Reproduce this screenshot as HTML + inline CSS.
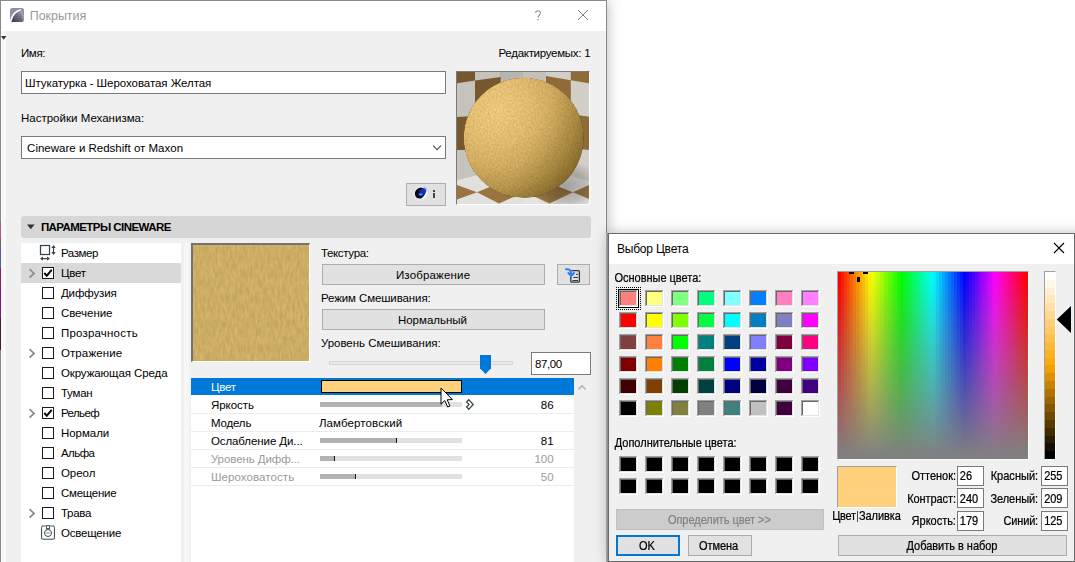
<!DOCTYPE html>
<html><head><meta charset="utf-8"><title>UI</title>
<style>
html,body{margin:0;padding:0;width:1075px;height:562px;overflow:hidden;background:#fff;}
#root{position:absolute;left:0;top:0;width:1075px;height:562px;overflow:hidden;background:#fff;font-family:"Liberation Sans",sans-serif;}
div,span,svg{box-sizing:border-box;}
</style></head><body><div id="root">
<div style="position:absolute;left:0px;top:0px;width:607px;height:580px;background:#f0f0f0;border-left:1px solid #8a8a8a;border-top:1px solid #8a8a8a;border-right:1px solid #8a8a8a;box-shadow:0 0 13px 0 rgba(0,0,0,.30);"></div>
<div style="position:absolute;left:0px;top:222px;width:1px;height:16px;background:#b4568c;"></div>
<div style="position:absolute;left:0px;top:238px;width:1px;height:8px;background:#6a6a6a;"></div>
<div style="position:absolute;left:0px;top:246px;width:1px;height:22px;background:#5a5aa0;"></div>
<div style="position:absolute;left:0px;top:268px;width:1px;height:24px;background:#8a2060;"></div>
<div style="position:absolute;left:0px;top:292px;width:1px;height:26px;background:#7a1a7a;"></div>
<div style="position:absolute;left:0px;top:318px;width:1px;height:32px;background:#40203a;"></div>
<div style="position:absolute;left:1px;top:1px;width:605px;height:30px;background:#fff;"></div>
<div style="position:absolute;left:1px;top:31px;width:5px;height:531px;background:#f8f8f8;"></div>
<svg style="position:absolute;left:1px;top:35px" width="6" height="6" viewBox="0 0 6 6"><path d="M0 1 L5.4 1 L2.7 4.8 Z" fill="#333"/></svg>
<svg style="position:absolute;left:10px;top:8px" width="14" height="14" viewBox="0 0 14 14">
<defs><linearGradient id="ig2" x1="0.2" y1="1" x2="0.95" y2="0.2"><stop offset="0" stop-color="#3c3a4a"/><stop offset="0.55" stop-color="#6c6a80"/><stop offset="1" stop-color="#9694ac"/></linearGradient></defs>
<rect x="0" y="0" width="14" height="14" rx="2.2" fill="#908ea6"/>
<path d="M0.8 14 C2.6 7.4 6.0 3.4 10.2 2.4 C12.6 4.4 13.2 8 12.8 11.6 L12.8 14 Z" fill="url(#ig2)"/>
<path d="M0.5 13.4 C2.4 6.8 5.8 2.9 10.2 2.0" stroke="#fff" stroke-width="1.7" fill="none" stroke-linecap="round"/>
<path d="M10.6 2.2 C12.6 4.4 13.2 7.4 12.6 10.4" stroke="#c4c3d2" stroke-width="0.9" fill="none" stroke-dasharray="1.2 0.6"/>
</svg>
<span style="position:absolute;left:29.75px;top:8.00px;line-height:16px;white-space:pre;font-size:12.5px;font-weight:400;color:#999;letter-spacing:-0.057px;">Покрытия</span>
<svg style="position:absolute;left:533px;top:8px" width="10" height="14" viewBox="533 8 10 14"><path d="M535.7 12.9 C535.6 10.2 540.5 10.0 540.4 13.0 C540.3 15.2 538.0 15.2 538.0 17.8" stroke="#8a8a8a" stroke-width="1.05" fill="none"/><rect x="537.4" y="19" width="1.2" height="1.2" fill="#8a8a8a"/></svg>
<svg style="position:absolute;left:577px;top:9px" width="12" height="12" viewBox="0 0 12 12"><path d="M1 1 L11 11 M11 1 L1 11" stroke="#808080" stroke-width="1" fill="none"/></svg>
<span style="position:absolute;left:20.91px;top:45.00px;line-height:16px;white-space:pre;font-size:11.5px;font-weight:400;color:#000;letter-spacing:-0.316px;">Имя:</span>
<span style="position:absolute;left:498.45px;top:45.00px;line-height:16px;white-space:pre;font-size:11.5px;font-weight:400;color:#000;letter-spacing:-0.276px;">Редактируемых: 1</span>
<div style="position:absolute;left:21px;top:71px;width:425px;height:23px;background:#fff;border:1px solid #7a7a7a;"></div>
<span style="position:absolute;left:24.91px;top:75.00px;line-height:16px;white-space:pre;font-size:11.5px;font-weight:400;color:#000;letter-spacing:-0.056px;">Штукатурка - Шероховатая Желтая</span>
<span style="position:absolute;left:20.91px;top:110.00px;line-height:16px;white-space:pre;font-size:11.5px;font-weight:400;color:#000;letter-spacing:0.017px;">Настройки Механизма:</span>
<div style="position:absolute;left:21px;top:136px;width:425px;height:23px;background:#fff;border:1px solid #7a7a7a;"></div>
<span style="position:absolute;left:27.11px;top:140.00px;line-height:16px;white-space:pre;font-size:11.5px;font-weight:400;color:#000;letter-spacing:0.001px;">Cineware и Redshift от Maxon</span>
<svg style="position:absolute;left:431px;top:143px" width="12" height="9" viewBox="431 143 12 9"><path d="M433.2 145.7 L437.1 149.6 L441.0 145.7" stroke="#505050" stroke-width="1.15" fill="none"/></svg>
<div style="position:absolute;left:406px;top:183px;width:40px;height:23px;background:#e1e1e1;border:1px solid #adadad;"></div>
<svg style="position:absolute;left:412px;top:185px" width="18" height="18" viewBox="412 185 18 18">
<defs><linearGradient id="c4" x1="0.1" y1="1" x2="0.9" y2="0"><stop offset="0" stop-color="#060c48"/><stop offset="0.5" stop-color="#0e2cac"/><stop offset="1" stop-color="#2040d0"/></linearGradient></defs>
<ellipse cx="421.1" cy="193.7" rx="7.1" ry="6.9" fill="#f4f4f7"/>
<ellipse cx="421.4" cy="194.2" rx="6.6" ry="6.2" fill="#dcdce6"/>
<ellipse cx="421.0" cy="193.4" rx="6.5" ry="6.2" fill="#fafafc"/>
<path d="M414.9 194.2 C414.6 190.6 417.6 187.8 421.4 187.6 L425.0 189.4 C426.0 193.0 424.0 197.6 420.2 198.6 C417.2 198.8 415.2 197.0 414.9 194.2 Z" fill="#06061a"/>
<path d="M418.4 196.0 C417.2 193.0 419.6 189.4 424.2 187.4 L426.4 189.6 C426.4 192.8 424.4 196.0 421.2 197.0 C420.0 197.2 418.9 196.9 418.4 196.0 Z" fill="url(#c4)"/>
<ellipse cx="420.8" cy="194.4" rx="1.9" ry="1.1" fill="#3f8fff"/>
<path d="M424.2 187.6 L426.4 189.6" stroke="#8aa4f8" stroke-width="1.4" fill="none"/>
</svg>
<div style="position:absolute;left:433px;top:190px;width:2px;height:2px;background:#444;"></div>
<div style="position:absolute;left:433px;top:193px;width:2px;height:5px;background:#444;"></div>
<div style="position:absolute;left:456px;top:71px;width:134px;height:134px;border-top:1px solid #7a7a7a;border-left:1px solid #7a7a7a;border-right:1px solid #fff;border-bottom:1px solid #fff;background:#888;"></div>
<svg style="position:absolute;left:457px;top:72px" width="132" height="132" viewBox="457 72 132 132">
<defs>
<radialGradient id="sg" cx="0.30" cy="0.28" r="0.86"><stop offset="0" stop-color="#ecc87e"/><stop offset="0.3" stop-color="#e3bd70"/><stop offset="0.55" stop-color="#d2ac60"/><stop offset="0.75" stop-color="#b9964d"/><stop offset="0.9" stop-color="#9c7c3c"/><stop offset="1" stop-color="#7a5e2a"/></radialGradient>
<filter id="nz" x="0" y="0" width="100%" height="100%" color-interpolation-filters="sRGB"><feTurbulence type="fractalNoise" baseFrequency="0.6 0.45" numOctaves="3" seed="3" result="n"/><feColorMatrix in="n" type="matrix" values="0.22 0 0 0 0.39  0.22 0 0 0 0.39  0.22 0 0 0 0.39  0 0 0 0 1" result="g"/><feComposite in="SourceGraphic" in2="g" operator="arithmetic" k1="1.0" k2="0.5" k3="0" k4="0" result="m"/><feComposite in="m" in2="SourceAlpha" operator="in"/></filter>
<radialGradient id="fsh" cx="0.5" cy="0.5" r="0.5"><stop offset="0" stop-color="#000" stop-opacity="0.30"/><stop offset="0.6" stop-color="#000" stop-opacity="0.18"/><stop offset="1" stop-color="#000" stop-opacity="0"/></radialGradient>
<linearGradient id="term" x1="0.25" y1="0.3" x2="1" y2="0.7"><stop offset="0" stop-color="#504408" stop-opacity="0"/><stop offset="0.45" stop-color="#504408" stop-opacity="0.04"/><stop offset="1" stop-color="#504408" stop-opacity="0.30"/></linearGradient>
<clipPath id="pc"><rect x="457" y="72" width="132" height="132"/></clipPath>
</defs>
<g clip-path="url(#pc)">
<!-- left wall (shadow) -->
<rect x="457" y="72" width="67" height="132" fill="#c6c2bc"/>
<polygon points="457,72 475,72 475,80.6 457,83.2" fill="#77572d"/>
<polygon points="475,80.6 500.8,77 500.8,112 475,116" fill="#77572d"/>
<polygon points="500.8,72 506.8,72 500.8,77" fill="#77572d"/>
<polygon points="457,117 475,116 475,150 457,150" fill="#77572d"/>
<polygon points="500.8,72 523.7,72 523.7,110 500.8,112" fill="#b9b5af"/>
<!-- right wall (lit) -->
<rect x="523.7" y="72" width="66" height="132" fill="#d2cec8"/>
<polygon points="534,72 546,72 546,76.1" fill="#8f6b3a"/>
<polygon points="546,76.1 570.8,80.2 570.8,114 546,110" fill="#8f6b3a"/>
<polygon points="570.8,72 589,72 589,83.2 570.8,80.2" fill="#8f6b3a"/>
<polygon points="570.8,114 589,116.7 589,150 570.8,148" fill="#8f6b3a"/>
<polygon points="523.7,72 546,72 546,110 523.7,108" fill="#c4c0ba"/>
<!-- floor -->
<polygon points="457,180.5 490,172 523.7,166 557,172 589,181.2 589,204 457,204" fill="#e6e4e0"/>
<polygon points="457,180.5 490,172 523.7,166 523.7,204 457,204" fill="#e2e0dc"/>
<polygon points="457,185 477,192.3 457,199.5" fill="#9a7440"/>
<polygon points="477,192.3 497,184 520,194 499,203.6" fill="#9a7440"/>
<polygon points="573,192.3 552,184 529,194 549.5,203.6" fill="#a07a44"/>
<polygon points="589,185 573,192.3 589,199" fill="#a07a44"/>
<!-- floor/wall shadow -->
<ellipse cx="566" cy="186" rx="34" ry="26" fill="url(#fsh)"/>
<!-- sphere -->
<circle cx="523.7" cy="137.7" r="60" fill="url(#sg)" filter="url(#nz)"/>
<circle cx="523.7" cy="137.7" r="60" fill="url(#term)"/>
</g></svg>
<div style="position:absolute;left:21px;top:216px;width:570px;height:22px;background:#d6d6d6;border-radius:3px;"></div>
<svg style="position:absolute;left:26px;top:223px" width="10" height="8" viewBox="0 0 10 8"><path d="M1 1.6 L8.6 1.6 L4.8 6.2 Z" fill="#333"/></svg>
<span style="position:absolute;left:40.91px;top:218.60px;line-height:16px;white-space:pre;font-size:11.5px;font-weight:700;color:#000;letter-spacing:-0.554px;">ПАРАМЕТРЫ CINEWARE</span>
<div style="position:absolute;left:21px;top:243px;width:160px;height:319px;background:#fff;"></div>
<div style="position:absolute;left:21px;top:263px;width:160px;height:20px;background:#d9d9d9;"></div>
<span style="position:absolute;left:60.91px;top:244.60px;line-height:16px;white-space:pre;font-size:11.5px;font-weight:400;color:#000;letter-spacing:-0.414px;">Размер</span>
<svg style="position:absolute;left:39px;top:244px" width="18" height="18" viewBox="0 0 18 18">
<rect x="1.5" y="1.5" width="9" height="9" fill="none" stroke="#36454a" stroke-width="1.25"/>
<path d="M14.5 2 L14.5 10" stroke="#36454a" stroke-width="1.2" fill="none"/>
<path d="M12.3 3.9 L14.5 1.1 L16.7 3.9 Z M12.3 8.1 L14.5 10.9 L16.7 8.1 Z" fill="#36454a"/>
<path d="M2 14.6 L10 14.6" stroke="#36454a" stroke-width="1.2" fill="none"/>
<path d="M3.9 12.5 L1.1 14.6 L3.9 16.7 Z M8.1 12.5 L10.9 14.6 L8.1 16.7 Z" fill="#36454a"/>
</svg>
<span style="position:absolute;left:60.91px;top:264.60px;line-height:16px;white-space:pre;font-size:11.5px;font-weight:400;color:#000;letter-spacing:-0.209px;">Цвет</span>
<div style="position:absolute;left:42px;top:267px;width:12px;height:12px;background:#fff;border:1px solid #1a1a1a;"></div>
<svg style="position:absolute;left:42px;top:267px" width="12" height="12" viewBox="0 0 12 12"><path d="M2.3 6.0 L4.8 8.7 L9.7 2.8" stroke="#000" stroke-width="1.9" fill="none"/></svg>
<svg style="position:absolute;left:28px;top:268px" width="8" height="11" viewBox="0 0 8 11"><path d="M1.5 1.2 L6 5.4 L1.5 9.6" stroke="#8c8c8c" stroke-width="1.8" fill="none"/></svg>
<span style="position:absolute;left:60.91px;top:284.60px;line-height:16px;white-space:pre;font-size:11.5px;font-weight:400;color:#000;letter-spacing:-0.118px;">Диффузия</span>
<div style="position:absolute;left:42px;top:287px;width:12px;height:12px;background:#fff;border:1px solid #1a1a1a;"></div>
<span style="position:absolute;left:60.91px;top:304.60px;line-height:16px;white-space:pre;font-size:11.5px;font-weight:400;color:#000;letter-spacing:-0.039px;">Свечение</span>
<div style="position:absolute;left:42px;top:307px;width:12px;height:12px;background:#fff;border:1px solid #1a1a1a;"></div>
<span style="position:absolute;left:60.91px;top:324.60px;line-height:16px;white-space:pre;font-size:11.5px;font-weight:400;color:#000;letter-spacing:0.204px;">Прозрачность</span>
<div style="position:absolute;left:42px;top:327px;width:12px;height:12px;background:#fff;border:1px solid #1a1a1a;"></div>
<span style="position:absolute;left:60.91px;top:344.60px;line-height:16px;white-space:pre;font-size:11.5px;font-weight:400;color:#000;letter-spacing:0.12px;">Отражение</span>
<div style="position:absolute;left:42px;top:347px;width:12px;height:12px;background:#fff;border:1px solid #1a1a1a;"></div>
<svg style="position:absolute;left:28px;top:348px" width="8" height="11" viewBox="0 0 8 11"><path d="M1.5 1.2 L6 5.4 L1.5 9.6" stroke="#8c8c8c" stroke-width="1.8" fill="none"/></svg>
<span style="position:absolute;left:60.91px;top:364.60px;line-height:16px;white-space:pre;font-size:11.5px;font-weight:400;color:#000;letter-spacing:-0.096px;">Окружающая Среда</span>
<div style="position:absolute;left:42px;top:367px;width:12px;height:12px;background:#fff;border:1px solid #1a1a1a;"></div>
<span style="position:absolute;left:60.91px;top:384.60px;line-height:16px;white-space:pre;font-size:11.5px;font-weight:400;color:#000;letter-spacing:-0.222px;">Туман</span>
<div style="position:absolute;left:42px;top:387px;width:12px;height:12px;background:#fff;border:1px solid #1a1a1a;"></div>
<span style="position:absolute;left:60.91px;top:404.60px;line-height:16px;white-space:pre;font-size:11.5px;font-weight:400;color:#000;letter-spacing:-0.584px;">Рельеф</span>
<div style="position:absolute;left:42px;top:407px;width:12px;height:12px;background:#fff;border:1px solid #1a1a1a;"></div>
<svg style="position:absolute;left:42px;top:407px" width="12" height="12" viewBox="0 0 12 12"><path d="M2.3 6.0 L4.8 8.7 L9.7 2.8" stroke="#000" stroke-width="1.9" fill="none"/></svg>
<svg style="position:absolute;left:28px;top:408px" width="8" height="11" viewBox="0 0 8 11"><path d="M1.5 1.2 L6 5.4 L1.5 9.6" stroke="#8c8c8c" stroke-width="1.8" fill="none"/></svg>
<span style="position:absolute;left:60.91px;top:424.60px;line-height:16px;white-space:pre;font-size:11.5px;font-weight:400;color:#000;letter-spacing:-0.029px;">Нормали</span>
<div style="position:absolute;left:42px;top:427px;width:12px;height:12px;background:#fff;border:1px solid #1a1a1a;"></div>
<span style="position:absolute;left:60.91px;top:444.60px;line-height:16px;white-space:pre;font-size:11.5px;font-weight:400;color:#000;letter-spacing:-0.538px;">Альфа</span>
<div style="position:absolute;left:42px;top:447px;width:12px;height:12px;background:#fff;border:1px solid #1a1a1a;"></div>
<span style="position:absolute;left:60.91px;top:464.60px;line-height:16px;white-space:pre;font-size:11.5px;font-weight:400;color:#000;letter-spacing:-0.01px;">Ореол</span>
<div style="position:absolute;left:42px;top:467px;width:12px;height:12px;background:#fff;border:1px solid #1a1a1a;"></div>
<span style="position:absolute;left:60.91px;top:484.60px;line-height:16px;white-space:pre;font-size:11.5px;font-weight:400;color:#000;letter-spacing:-0.246px;">Смещение</span>
<div style="position:absolute;left:42px;top:487px;width:12px;height:12px;background:#fff;border:1px solid #1a1a1a;"></div>
<span style="position:absolute;left:60.91px;top:504.60px;line-height:16px;white-space:pre;font-size:11.5px;font-weight:400;color:#000;letter-spacing:-0.26px;">Трава</span>
<div style="position:absolute;left:42px;top:507px;width:12px;height:12px;background:#fff;border:1px solid #1a1a1a;"></div>
<svg style="position:absolute;left:28px;top:508px" width="8" height="11" viewBox="0 0 8 11"><path d="M1.5 1.2 L6 5.4 L1.5 9.6" stroke="#8c8c8c" stroke-width="1.8" fill="none"/></svg>
<span style="position:absolute;left:60.91px;top:524.60px;line-height:16px;white-space:pre;font-size:11.5px;font-weight:400;color:#000;letter-spacing:-0.193px;">Освещение</span>
<svg style="position:absolute;left:41px;top:525px" width="14" height="15" viewBox="0 0 14 15">
<path d="M4.6 1 L1.8 1 Q0.6 1 0.6 2.2 L0.6 13 Q0.6 14.2 1.8 14.2 L12.2 14.2 Q13.4 14.2 13.4 13 L13.4 2.2 Q13.4 1 12.2 1 L9.4 1" stroke="#36454a" stroke-width="1" fill="none"/>
<rect x="5.4" y="0.6" width="3.2" height="3" fill="none" stroke="#36454a" stroke-width="0.9"/>
<circle cx="7" cy="8" r="3.5" fill="none" stroke="#36454a" stroke-width="1"/>
<path d="M5.2 8.3 L6 7.4 L7 8.6 L8 7.4 L8.8 8.3" stroke="#36454a" stroke-width="0.7" fill="none"/>
</svg>
<div style="position:absolute;left:184px;top:243px;width:5px;height:319px;background:#f7f7f7;"></div>
<div style="position:absolute;left:191px;top:243px;width:119px;height:119px;background:#c8a85c;border-top:2px solid #727272;border-left:2px solid #727272;border-right:1px solid #fff;border-bottom:1px solid #fff;"></div>
<svg style="position:absolute;left:193px;top:245px" width="116" height="116" viewBox="0 0 116 116">
<defs><filter id="tx" x="0" y="0" width="100%" height="100%" color-interpolation-filters="sRGB"><feTurbulence type="fractalNoise" baseFrequency="0.40 0.12" numOctaves="3" seed="7" result="n"/>
<feColorMatrix in="n" type="matrix" values="0.14 0 0 0 0.730  0.13 0 0 0 0.613  0.09 0 0 0 0.347  0 0 0 0 1"/></filter></defs>
<rect width="116" height="116" fill="#c9a95d" filter="url(#tx)"/>
</svg>
<span style="position:absolute;left:320.91px;top:244.60px;line-height:16px;white-space:pre;font-size:11.5px;font-weight:400;color:#000;letter-spacing:-0.329px;">Текстура:</span>
<div style="position:absolute;left:322px;top:264px;width:223px;height:21px;background:#e1e1e1;border:1px solid #adadad;"></div>
<span style="position:absolute;left:395.91px;top:267.00px;line-height:16px;white-space:pre;font-size:11.5px;font-weight:400;color:#000;letter-spacing:0.172px;">Изображение</span>
<div style="position:absolute;left:557px;top:264px;width:33px;height:21px;background:#e1e1e1;border:1px solid #adadad;"></div>
<svg style="position:absolute;left:560px;top:265px" width="26" height="19" viewBox="560 265 26 19">
<path d="M571.6 270.6 L578.4 270.6 Q579.4 270.6 579.4 271.6 L579.4 281.2 Q579.4 282.2 578.4 282.2 L571.8 282.2 Q570.8 282.2 570.8 281.2 L570.8 276.4" fill="none" stroke="#2c3a40" stroke-width="1.3"/>
<path d="M576 274.3 H578 M573.4 277.5 H578 M572.4 280.5 H578" stroke="#2c3a40" stroke-width="1.1"/>
<path d="M565.2 269.2 L567.6 269.2 C570.2 269.2 571.2 270.6 571.2 274.4" stroke="#2a7fff" stroke-width="2.1" fill="none"/>
<path d="M567.8 272.4 L571.2 276.0 L574.6 272.4" stroke="#2a7fff" stroke-width="2.1" fill="none"/>
<path d="M569 273 L573.4 273 L571.2 275.6 Z" fill="#2a7fff"/>
</svg>
<span style="position:absolute;left:320.91px;top:289.60px;line-height:16px;white-space:pre;font-size:11.5px;font-weight:400;color:#000;letter-spacing:-0.102px;">Режим Смешивания:</span>
<div style="position:absolute;left:322px;top:309px;width:223px;height:21px;background:#e1e1e1;border:1px solid #adadad;"></div>
<span style="position:absolute;left:397.91px;top:312.00px;line-height:16px;white-space:pre;font-size:11.5px;font-weight:400;color:#000;letter-spacing:0.0px;">Нормальный</span>
<span style="position:absolute;left:320.91px;top:334.60px;line-height:16px;white-space:pre;font-size:11.5px;font-weight:400;color:#000;letter-spacing:-0.031px;">Уровень Смешивания:</span>
<div style="position:absolute;left:329px;top:361px;width:184px;height:4px;background:#e7eaea;border:1px solid #d6d6d6;"></div>
<svg style="position:absolute;left:480px;top:355px" width="11" height="19" viewBox="0 0 11 19"><path d="M0 0 H11 V13.2 L5.5 19 L0 13.2 Z" fill="#0078d7"/></svg>
<div style="position:absolute;left:531px;top:352px;width:60px;height:23px;background:#fff;border:1px solid #7a7a7a;"></div>
<span style="position:absolute;left:534.91px;top:356.00px;line-height:16px;white-space:pre;font-size:11.5px;font-weight:400;color:#000;letter-spacing:-0.407px;">87,00</span>
<div style="position:absolute;left:191px;top:378px;width:400px;height:184px;background:#fff;"></div>
<div style="position:absolute;left:574px;top:378px;width:17px;height:184px;background:#f0f0f0;"></div>
<svg style="position:absolute;left:577px;top:383px" width="10" height="8" viewBox="0 0 10 8"><path d="M1.4 6.4 L5 2.8 L8.6 6.4" stroke="#bcbcbc" stroke-width="1.9" fill="none"/></svg>
<div style="position:absolute;left:191px;top:378px;width:383px;height:17px;background:#0078d7;"></div>
<div style="position:absolute;left:321px;top:380px;width:141px;height:13px;background:#ffd17d;border:1px solid #000;"></div>
<div style="position:absolute;left:191px;top:413px;width:383px;height:1px;background:#ececec;"></div>
<div style="position:absolute;left:191px;top:431px;width:383px;height:1px;background:#ececec;"></div>
<div style="position:absolute;left:191px;top:449px;width:383px;height:1px;background:#ececec;"></div>
<div style="position:absolute;left:191px;top:467px;width:383px;height:1px;background:#ececec;"></div>
<div style="position:absolute;left:191px;top:485px;width:383px;height:1px;background:#ececec;"></div>
<span style="position:absolute;left:210.91px;top:379.00px;line-height:16px;white-space:pre;font-size:11.5px;font-weight:400;color:#fff;letter-spacing:-0.259px;">Цвет</span>
<span style="position:absolute;left:210.91px;top:397.00px;line-height:16px;white-space:pre;font-size:11.5px;font-weight:400;color:#000;letter-spacing:-0.046px;">Яркость</span>
<div style="position:absolute;left:320px;top:402px;width:142px;height:5px;background:#e1e1e1;"></div>
<div style="position:absolute;left:320px;top:402px;width:122px;height:5px;background:#b2b2b2;"></div>
<span style="position:absolute;left:540.78px;top:397.00px;line-height:16px;white-space:pre;font-size:11.5px;font-weight:400;color:#000;letter-spacing:0px;">86</span>
<span style="position:absolute;left:210.91px;top:415.00px;line-height:16px;white-space:pre;font-size:11.5px;font-weight:400;color:#000;letter-spacing:-0.156px;">Модель</span>
<span style="position:absolute;left:210.91px;top:433.00px;line-height:16px;white-space:pre;font-size:11.5px;font-weight:400;color:#000;letter-spacing:-0.087px;">Ослабление Ди...</span>
<div style="position:absolute;left:320px;top:438px;width:142px;height:5px;background:#e1e1e1;"></div>
<div style="position:absolute;left:320px;top:438px;width:76px;height:5px;background:#b2b2b2;"></div>
<div style="position:absolute;left:395.8px;top:437.6px;width:1.4px;height:5.6px;background:#111;"></div>
<span style="position:absolute;left:540.78px;top:433.00px;line-height:16px;white-space:pre;font-size:11.5px;font-weight:400;color:#000;letter-spacing:0px;">81</span>
<span style="position:absolute;left:210.91px;top:451.00px;line-height:16px;white-space:pre;font-size:11.5px;font-weight:400;color:#9a9a9a;letter-spacing:-0.085px;">Уровень Дифф...</span>
<div style="position:absolute;left:320px;top:456px;width:142px;height:5px;background:#e1e1e1;"></div>
<div style="position:absolute;left:320px;top:456px;width:14px;height:5px;background:#b2b2b2;"></div>
<div style="position:absolute;left:333.8px;top:455.6px;width:1.4px;height:5.6px;background:#111;"></div>
<span style="position:absolute;left:534.39px;top:451.00px;line-height:16px;white-space:pre;font-size:11.5px;font-weight:400;color:#9a9a9a;letter-spacing:0px;">100</span>
<span style="position:absolute;left:210.91px;top:469.00px;line-height:16px;white-space:pre;font-size:11.5px;font-weight:400;color:#9a9a9a;letter-spacing:0.082px;">Шероховатость</span>
<div style="position:absolute;left:320px;top:474px;width:142px;height:5px;background:#e1e1e1;"></div>
<div style="position:absolute;left:320px;top:474px;width:35px;height:5px;background:#b2b2b2;"></div>
<div style="position:absolute;left:354.8px;top:473.6px;width:1.4px;height:5.6px;background:#111;"></div>
<span style="position:absolute;left:540.78px;top:469.00px;line-height:16px;white-space:pre;font-size:11.5px;font-weight:400;color:#9a9a9a;letter-spacing:0px;">50</span>
<span style="position:absolute;left:318.91px;top:415.00px;line-height:16px;white-space:pre;font-size:11.5px;font-weight:400;color:#000;letter-spacing:0.114px;">Ламбертовский</span>
<svg style="position:absolute;left:465px;top:398px" width="10" height="13" viewBox="0 0 10 13"><path d="M3.8 1.7 L8.2 6.5 L3.8 11.3 L1.6 9.0 L4.1 6.5 L1.6 4.0 Z" fill="#fff" stroke="#36454a" stroke-width="1.25"/></svg>
<div style="position:absolute;left:606px;top:0px;width:1px;height:562px;background:#8a8a8a;"></div>
<div style="position:absolute;left:608px;top:233px;width:480px;height:329px;background:#f0f0f0;border:1px solid #6a6a6a;box-shadow:0 1px 13px 0 rgba(0,0,0,.29);"></div>
<div style="position:absolute;left:1074px;top:233px;width:1px;height:329px;background:#6a6a6a;"></div>
<div style="position:absolute;left:607px;top:233px;width:1px;height:329px;background:#8e8e8e;"></div>
<div style="position:absolute;left:606px;top:233px;width:1px;height:329px;background:#a4a4a4;"></div>
<div style="position:absolute;left:609px;top:234px;width:465px;height:30px;background:#fff;"></div>
<span style="position:absolute;left:616.88px;top:241.00px;line-height:16px;white-space:pre;font-size:12px;font-weight:400;color:#000;letter-spacing:-0.188px;">Выбор Цвета</span>
<svg style="position:absolute;left:1053px;top:242px" width="12" height="12" viewBox="0 0 12 12"><path d="M1 1 L11 11 M11 1 L1 11" stroke="#000" stroke-width="1.1" fill="none"/></svg>
<span style="position:absolute;left:614.54px;top:269.50px;line-height:16px;white-space:pre;font-size:11px;font-weight:400;color:#000;letter-spacing:-0.025px;transform:scaleY(1.09);transform-origin:0 12px;-webkit-text-stroke:0.22px #000;">Основные цвета:</span>
<div style="position:absolute;left:619px;top:290px;width:19px;height:17px;background:#fff;"></div><div style="position:absolute;left:619px;top:290px;width:18px;height:16px;background:#a0a0a0;"></div><div style="position:absolute;left:620px;top:291px;width:17px;height:15px;background:#e3e3e3;"></div><div style="position:absolute;left:620px;top:291px;width:16px;height:14px;background:#696969;"></div><div style="position:absolute;left:621px;top:292px;width:15px;height:13px;background:#FF8080;"></div>
<div style="position:absolute;left:645px;top:290px;width:19px;height:17px;background:#fff;"></div><div style="position:absolute;left:645px;top:290px;width:18px;height:16px;background:#a0a0a0;"></div><div style="position:absolute;left:646px;top:291px;width:17px;height:15px;background:#e3e3e3;"></div><div style="position:absolute;left:646px;top:291px;width:16px;height:14px;background:#696969;"></div><div style="position:absolute;left:647px;top:292px;width:15px;height:13px;background:#FFFF80;"></div>
<div style="position:absolute;left:671px;top:290px;width:19px;height:17px;background:#fff;"></div><div style="position:absolute;left:671px;top:290px;width:18px;height:16px;background:#a0a0a0;"></div><div style="position:absolute;left:672px;top:291px;width:17px;height:15px;background:#e3e3e3;"></div><div style="position:absolute;left:672px;top:291px;width:16px;height:14px;background:#696969;"></div><div style="position:absolute;left:673px;top:292px;width:15px;height:13px;background:#80FF80;"></div>
<div style="position:absolute;left:697px;top:290px;width:19px;height:17px;background:#fff;"></div><div style="position:absolute;left:697px;top:290px;width:18px;height:16px;background:#a0a0a0;"></div><div style="position:absolute;left:698px;top:291px;width:17px;height:15px;background:#e3e3e3;"></div><div style="position:absolute;left:698px;top:291px;width:16px;height:14px;background:#696969;"></div><div style="position:absolute;left:699px;top:292px;width:15px;height:13px;background:#00FF80;"></div>
<div style="position:absolute;left:723px;top:290px;width:19px;height:17px;background:#fff;"></div><div style="position:absolute;left:723px;top:290px;width:18px;height:16px;background:#a0a0a0;"></div><div style="position:absolute;left:724px;top:291px;width:17px;height:15px;background:#e3e3e3;"></div><div style="position:absolute;left:724px;top:291px;width:16px;height:14px;background:#696969;"></div><div style="position:absolute;left:725px;top:292px;width:15px;height:13px;background:#80FFFF;"></div>
<div style="position:absolute;left:749px;top:290px;width:19px;height:17px;background:#fff;"></div><div style="position:absolute;left:749px;top:290px;width:18px;height:16px;background:#a0a0a0;"></div><div style="position:absolute;left:750px;top:291px;width:17px;height:15px;background:#e3e3e3;"></div><div style="position:absolute;left:750px;top:291px;width:16px;height:14px;background:#696969;"></div><div style="position:absolute;left:751px;top:292px;width:15px;height:13px;background:#0080FF;"></div>
<div style="position:absolute;left:775px;top:290px;width:19px;height:17px;background:#fff;"></div><div style="position:absolute;left:775px;top:290px;width:18px;height:16px;background:#a0a0a0;"></div><div style="position:absolute;left:776px;top:291px;width:17px;height:15px;background:#e3e3e3;"></div><div style="position:absolute;left:776px;top:291px;width:16px;height:14px;background:#696969;"></div><div style="position:absolute;left:777px;top:292px;width:15px;height:13px;background:#FF80C0;"></div>
<div style="position:absolute;left:801px;top:290px;width:19px;height:17px;background:#fff;"></div><div style="position:absolute;left:801px;top:290px;width:18px;height:16px;background:#a0a0a0;"></div><div style="position:absolute;left:802px;top:291px;width:17px;height:15px;background:#e3e3e3;"></div><div style="position:absolute;left:802px;top:291px;width:16px;height:14px;background:#696969;"></div><div style="position:absolute;left:803px;top:292px;width:15px;height:13px;background:#FF80FF;"></div>
<div style="position:absolute;left:619px;top:312px;width:19px;height:17px;background:#fff;"></div><div style="position:absolute;left:619px;top:312px;width:18px;height:16px;background:#a0a0a0;"></div><div style="position:absolute;left:620px;top:313px;width:17px;height:15px;background:#e3e3e3;"></div><div style="position:absolute;left:620px;top:313px;width:16px;height:14px;background:#696969;"></div><div style="position:absolute;left:621px;top:314px;width:15px;height:13px;background:#FF0000;"></div>
<div style="position:absolute;left:645px;top:312px;width:19px;height:17px;background:#fff;"></div><div style="position:absolute;left:645px;top:312px;width:18px;height:16px;background:#a0a0a0;"></div><div style="position:absolute;left:646px;top:313px;width:17px;height:15px;background:#e3e3e3;"></div><div style="position:absolute;left:646px;top:313px;width:16px;height:14px;background:#696969;"></div><div style="position:absolute;left:647px;top:314px;width:15px;height:13px;background:#FFFF00;"></div>
<div style="position:absolute;left:671px;top:312px;width:19px;height:17px;background:#fff;"></div><div style="position:absolute;left:671px;top:312px;width:18px;height:16px;background:#a0a0a0;"></div><div style="position:absolute;left:672px;top:313px;width:17px;height:15px;background:#e3e3e3;"></div><div style="position:absolute;left:672px;top:313px;width:16px;height:14px;background:#696969;"></div><div style="position:absolute;left:673px;top:314px;width:15px;height:13px;background:#80FF00;"></div>
<div style="position:absolute;left:697px;top:312px;width:19px;height:17px;background:#fff;"></div><div style="position:absolute;left:697px;top:312px;width:18px;height:16px;background:#a0a0a0;"></div><div style="position:absolute;left:698px;top:313px;width:17px;height:15px;background:#e3e3e3;"></div><div style="position:absolute;left:698px;top:313px;width:16px;height:14px;background:#696969;"></div><div style="position:absolute;left:699px;top:314px;width:15px;height:13px;background:#00FF40;"></div>
<div style="position:absolute;left:723px;top:312px;width:19px;height:17px;background:#fff;"></div><div style="position:absolute;left:723px;top:312px;width:18px;height:16px;background:#a0a0a0;"></div><div style="position:absolute;left:724px;top:313px;width:17px;height:15px;background:#e3e3e3;"></div><div style="position:absolute;left:724px;top:313px;width:16px;height:14px;background:#696969;"></div><div style="position:absolute;left:725px;top:314px;width:15px;height:13px;background:#00FFFF;"></div>
<div style="position:absolute;left:749px;top:312px;width:19px;height:17px;background:#fff;"></div><div style="position:absolute;left:749px;top:312px;width:18px;height:16px;background:#a0a0a0;"></div><div style="position:absolute;left:750px;top:313px;width:17px;height:15px;background:#e3e3e3;"></div><div style="position:absolute;left:750px;top:313px;width:16px;height:14px;background:#696969;"></div><div style="position:absolute;left:751px;top:314px;width:15px;height:13px;background:#0080C0;"></div>
<div style="position:absolute;left:775px;top:312px;width:19px;height:17px;background:#fff;"></div><div style="position:absolute;left:775px;top:312px;width:18px;height:16px;background:#a0a0a0;"></div><div style="position:absolute;left:776px;top:313px;width:17px;height:15px;background:#e3e3e3;"></div><div style="position:absolute;left:776px;top:313px;width:16px;height:14px;background:#696969;"></div><div style="position:absolute;left:777px;top:314px;width:15px;height:13px;background:#8080C0;"></div>
<div style="position:absolute;left:801px;top:312px;width:19px;height:17px;background:#fff;"></div><div style="position:absolute;left:801px;top:312px;width:18px;height:16px;background:#a0a0a0;"></div><div style="position:absolute;left:802px;top:313px;width:17px;height:15px;background:#e3e3e3;"></div><div style="position:absolute;left:802px;top:313px;width:16px;height:14px;background:#696969;"></div><div style="position:absolute;left:803px;top:314px;width:15px;height:13px;background:#FF00FF;"></div>
<div style="position:absolute;left:619px;top:334px;width:19px;height:17px;background:#fff;"></div><div style="position:absolute;left:619px;top:334px;width:18px;height:16px;background:#a0a0a0;"></div><div style="position:absolute;left:620px;top:335px;width:17px;height:15px;background:#e3e3e3;"></div><div style="position:absolute;left:620px;top:335px;width:16px;height:14px;background:#696969;"></div><div style="position:absolute;left:621px;top:336px;width:15px;height:13px;background:#804040;"></div>
<div style="position:absolute;left:645px;top:334px;width:19px;height:17px;background:#fff;"></div><div style="position:absolute;left:645px;top:334px;width:18px;height:16px;background:#a0a0a0;"></div><div style="position:absolute;left:646px;top:335px;width:17px;height:15px;background:#e3e3e3;"></div><div style="position:absolute;left:646px;top:335px;width:16px;height:14px;background:#696969;"></div><div style="position:absolute;left:647px;top:336px;width:15px;height:13px;background:#FF8040;"></div>
<div style="position:absolute;left:671px;top:334px;width:19px;height:17px;background:#fff;"></div><div style="position:absolute;left:671px;top:334px;width:18px;height:16px;background:#a0a0a0;"></div><div style="position:absolute;left:672px;top:335px;width:17px;height:15px;background:#e3e3e3;"></div><div style="position:absolute;left:672px;top:335px;width:16px;height:14px;background:#696969;"></div><div style="position:absolute;left:673px;top:336px;width:15px;height:13px;background:#00FF00;"></div>
<div style="position:absolute;left:697px;top:334px;width:19px;height:17px;background:#fff;"></div><div style="position:absolute;left:697px;top:334px;width:18px;height:16px;background:#a0a0a0;"></div><div style="position:absolute;left:698px;top:335px;width:17px;height:15px;background:#e3e3e3;"></div><div style="position:absolute;left:698px;top:335px;width:16px;height:14px;background:#696969;"></div><div style="position:absolute;left:699px;top:336px;width:15px;height:13px;background:#008080;"></div>
<div style="position:absolute;left:723px;top:334px;width:19px;height:17px;background:#fff;"></div><div style="position:absolute;left:723px;top:334px;width:18px;height:16px;background:#a0a0a0;"></div><div style="position:absolute;left:724px;top:335px;width:17px;height:15px;background:#e3e3e3;"></div><div style="position:absolute;left:724px;top:335px;width:16px;height:14px;background:#696969;"></div><div style="position:absolute;left:725px;top:336px;width:15px;height:13px;background:#004080;"></div>
<div style="position:absolute;left:749px;top:334px;width:19px;height:17px;background:#fff;"></div><div style="position:absolute;left:749px;top:334px;width:18px;height:16px;background:#a0a0a0;"></div><div style="position:absolute;left:750px;top:335px;width:17px;height:15px;background:#e3e3e3;"></div><div style="position:absolute;left:750px;top:335px;width:16px;height:14px;background:#696969;"></div><div style="position:absolute;left:751px;top:336px;width:15px;height:13px;background:#8080FF;"></div>
<div style="position:absolute;left:775px;top:334px;width:19px;height:17px;background:#fff;"></div><div style="position:absolute;left:775px;top:334px;width:18px;height:16px;background:#a0a0a0;"></div><div style="position:absolute;left:776px;top:335px;width:17px;height:15px;background:#e3e3e3;"></div><div style="position:absolute;left:776px;top:335px;width:16px;height:14px;background:#696969;"></div><div style="position:absolute;left:777px;top:336px;width:15px;height:13px;background:#800040;"></div>
<div style="position:absolute;left:801px;top:334px;width:19px;height:17px;background:#fff;"></div><div style="position:absolute;left:801px;top:334px;width:18px;height:16px;background:#a0a0a0;"></div><div style="position:absolute;left:802px;top:335px;width:17px;height:15px;background:#e3e3e3;"></div><div style="position:absolute;left:802px;top:335px;width:16px;height:14px;background:#696969;"></div><div style="position:absolute;left:803px;top:336px;width:15px;height:13px;background:#FF0080;"></div>
<div style="position:absolute;left:619px;top:356px;width:19px;height:17px;background:#fff;"></div><div style="position:absolute;left:619px;top:356px;width:18px;height:16px;background:#a0a0a0;"></div><div style="position:absolute;left:620px;top:357px;width:17px;height:15px;background:#e3e3e3;"></div><div style="position:absolute;left:620px;top:357px;width:16px;height:14px;background:#696969;"></div><div style="position:absolute;left:621px;top:358px;width:15px;height:13px;background:#800000;"></div>
<div style="position:absolute;left:645px;top:356px;width:19px;height:17px;background:#fff;"></div><div style="position:absolute;left:645px;top:356px;width:18px;height:16px;background:#a0a0a0;"></div><div style="position:absolute;left:646px;top:357px;width:17px;height:15px;background:#e3e3e3;"></div><div style="position:absolute;left:646px;top:357px;width:16px;height:14px;background:#696969;"></div><div style="position:absolute;left:647px;top:358px;width:15px;height:13px;background:#FF8000;"></div>
<div style="position:absolute;left:671px;top:356px;width:19px;height:17px;background:#fff;"></div><div style="position:absolute;left:671px;top:356px;width:18px;height:16px;background:#a0a0a0;"></div><div style="position:absolute;left:672px;top:357px;width:17px;height:15px;background:#e3e3e3;"></div><div style="position:absolute;left:672px;top:357px;width:16px;height:14px;background:#696969;"></div><div style="position:absolute;left:673px;top:358px;width:15px;height:13px;background:#008000;"></div>
<div style="position:absolute;left:697px;top:356px;width:19px;height:17px;background:#fff;"></div><div style="position:absolute;left:697px;top:356px;width:18px;height:16px;background:#a0a0a0;"></div><div style="position:absolute;left:698px;top:357px;width:17px;height:15px;background:#e3e3e3;"></div><div style="position:absolute;left:698px;top:357px;width:16px;height:14px;background:#696969;"></div><div style="position:absolute;left:699px;top:358px;width:15px;height:13px;background:#008040;"></div>
<div style="position:absolute;left:723px;top:356px;width:19px;height:17px;background:#fff;"></div><div style="position:absolute;left:723px;top:356px;width:18px;height:16px;background:#a0a0a0;"></div><div style="position:absolute;left:724px;top:357px;width:17px;height:15px;background:#e3e3e3;"></div><div style="position:absolute;left:724px;top:357px;width:16px;height:14px;background:#696969;"></div><div style="position:absolute;left:725px;top:358px;width:15px;height:13px;background:#0000FF;"></div>
<div style="position:absolute;left:749px;top:356px;width:19px;height:17px;background:#fff;"></div><div style="position:absolute;left:749px;top:356px;width:18px;height:16px;background:#a0a0a0;"></div><div style="position:absolute;left:750px;top:357px;width:17px;height:15px;background:#e3e3e3;"></div><div style="position:absolute;left:750px;top:357px;width:16px;height:14px;background:#696969;"></div><div style="position:absolute;left:751px;top:358px;width:15px;height:13px;background:#0000A0;"></div>
<div style="position:absolute;left:775px;top:356px;width:19px;height:17px;background:#fff;"></div><div style="position:absolute;left:775px;top:356px;width:18px;height:16px;background:#a0a0a0;"></div><div style="position:absolute;left:776px;top:357px;width:17px;height:15px;background:#e3e3e3;"></div><div style="position:absolute;left:776px;top:357px;width:16px;height:14px;background:#696969;"></div><div style="position:absolute;left:777px;top:358px;width:15px;height:13px;background:#800080;"></div>
<div style="position:absolute;left:801px;top:356px;width:19px;height:17px;background:#fff;"></div><div style="position:absolute;left:801px;top:356px;width:18px;height:16px;background:#a0a0a0;"></div><div style="position:absolute;left:802px;top:357px;width:17px;height:15px;background:#e3e3e3;"></div><div style="position:absolute;left:802px;top:357px;width:16px;height:14px;background:#696969;"></div><div style="position:absolute;left:803px;top:358px;width:15px;height:13px;background:#8000FF;"></div>
<div style="position:absolute;left:619px;top:378px;width:19px;height:17px;background:#fff;"></div><div style="position:absolute;left:619px;top:378px;width:18px;height:16px;background:#a0a0a0;"></div><div style="position:absolute;left:620px;top:379px;width:17px;height:15px;background:#e3e3e3;"></div><div style="position:absolute;left:620px;top:379px;width:16px;height:14px;background:#696969;"></div><div style="position:absolute;left:621px;top:380px;width:15px;height:13px;background:#400000;"></div>
<div style="position:absolute;left:645px;top:378px;width:19px;height:17px;background:#fff;"></div><div style="position:absolute;left:645px;top:378px;width:18px;height:16px;background:#a0a0a0;"></div><div style="position:absolute;left:646px;top:379px;width:17px;height:15px;background:#e3e3e3;"></div><div style="position:absolute;left:646px;top:379px;width:16px;height:14px;background:#696969;"></div><div style="position:absolute;left:647px;top:380px;width:15px;height:13px;background:#804000;"></div>
<div style="position:absolute;left:671px;top:378px;width:19px;height:17px;background:#fff;"></div><div style="position:absolute;left:671px;top:378px;width:18px;height:16px;background:#a0a0a0;"></div><div style="position:absolute;left:672px;top:379px;width:17px;height:15px;background:#e3e3e3;"></div><div style="position:absolute;left:672px;top:379px;width:16px;height:14px;background:#696969;"></div><div style="position:absolute;left:673px;top:380px;width:15px;height:13px;background:#004000;"></div>
<div style="position:absolute;left:697px;top:378px;width:19px;height:17px;background:#fff;"></div><div style="position:absolute;left:697px;top:378px;width:18px;height:16px;background:#a0a0a0;"></div><div style="position:absolute;left:698px;top:379px;width:17px;height:15px;background:#e3e3e3;"></div><div style="position:absolute;left:698px;top:379px;width:16px;height:14px;background:#696969;"></div><div style="position:absolute;left:699px;top:380px;width:15px;height:13px;background:#004040;"></div>
<div style="position:absolute;left:723px;top:378px;width:19px;height:17px;background:#fff;"></div><div style="position:absolute;left:723px;top:378px;width:18px;height:16px;background:#a0a0a0;"></div><div style="position:absolute;left:724px;top:379px;width:17px;height:15px;background:#e3e3e3;"></div><div style="position:absolute;left:724px;top:379px;width:16px;height:14px;background:#696969;"></div><div style="position:absolute;left:725px;top:380px;width:15px;height:13px;background:#000080;"></div>
<div style="position:absolute;left:749px;top:378px;width:19px;height:17px;background:#fff;"></div><div style="position:absolute;left:749px;top:378px;width:18px;height:16px;background:#a0a0a0;"></div><div style="position:absolute;left:750px;top:379px;width:17px;height:15px;background:#e3e3e3;"></div><div style="position:absolute;left:750px;top:379px;width:16px;height:14px;background:#696969;"></div><div style="position:absolute;left:751px;top:380px;width:15px;height:13px;background:#000040;"></div>
<div style="position:absolute;left:775px;top:378px;width:19px;height:17px;background:#fff;"></div><div style="position:absolute;left:775px;top:378px;width:18px;height:16px;background:#a0a0a0;"></div><div style="position:absolute;left:776px;top:379px;width:17px;height:15px;background:#e3e3e3;"></div><div style="position:absolute;left:776px;top:379px;width:16px;height:14px;background:#696969;"></div><div style="position:absolute;left:777px;top:380px;width:15px;height:13px;background:#400040;"></div>
<div style="position:absolute;left:801px;top:378px;width:19px;height:17px;background:#fff;"></div><div style="position:absolute;left:801px;top:378px;width:18px;height:16px;background:#a0a0a0;"></div><div style="position:absolute;left:802px;top:379px;width:17px;height:15px;background:#e3e3e3;"></div><div style="position:absolute;left:802px;top:379px;width:16px;height:14px;background:#696969;"></div><div style="position:absolute;left:803px;top:380px;width:15px;height:13px;background:#400080;"></div>
<div style="position:absolute;left:619px;top:400px;width:19px;height:17px;background:#fff;"></div><div style="position:absolute;left:619px;top:400px;width:18px;height:16px;background:#a0a0a0;"></div><div style="position:absolute;left:620px;top:401px;width:17px;height:15px;background:#e3e3e3;"></div><div style="position:absolute;left:620px;top:401px;width:16px;height:14px;background:#696969;"></div><div style="position:absolute;left:621px;top:402px;width:15px;height:13px;background:#000000;"></div>
<div style="position:absolute;left:645px;top:400px;width:19px;height:17px;background:#fff;"></div><div style="position:absolute;left:645px;top:400px;width:18px;height:16px;background:#a0a0a0;"></div><div style="position:absolute;left:646px;top:401px;width:17px;height:15px;background:#e3e3e3;"></div><div style="position:absolute;left:646px;top:401px;width:16px;height:14px;background:#696969;"></div><div style="position:absolute;left:647px;top:402px;width:15px;height:13px;background:#808000;"></div>
<div style="position:absolute;left:671px;top:400px;width:19px;height:17px;background:#fff;"></div><div style="position:absolute;left:671px;top:400px;width:18px;height:16px;background:#a0a0a0;"></div><div style="position:absolute;left:672px;top:401px;width:17px;height:15px;background:#e3e3e3;"></div><div style="position:absolute;left:672px;top:401px;width:16px;height:14px;background:#696969;"></div><div style="position:absolute;left:673px;top:402px;width:15px;height:13px;background:#808040;"></div>
<div style="position:absolute;left:697px;top:400px;width:19px;height:17px;background:#fff;"></div><div style="position:absolute;left:697px;top:400px;width:18px;height:16px;background:#a0a0a0;"></div><div style="position:absolute;left:698px;top:401px;width:17px;height:15px;background:#e3e3e3;"></div><div style="position:absolute;left:698px;top:401px;width:16px;height:14px;background:#696969;"></div><div style="position:absolute;left:699px;top:402px;width:15px;height:13px;background:#808080;"></div>
<div style="position:absolute;left:723px;top:400px;width:19px;height:17px;background:#fff;"></div><div style="position:absolute;left:723px;top:400px;width:18px;height:16px;background:#a0a0a0;"></div><div style="position:absolute;left:724px;top:401px;width:17px;height:15px;background:#e3e3e3;"></div><div style="position:absolute;left:724px;top:401px;width:16px;height:14px;background:#696969;"></div><div style="position:absolute;left:725px;top:402px;width:15px;height:13px;background:#408080;"></div>
<div style="position:absolute;left:749px;top:400px;width:19px;height:17px;background:#fff;"></div><div style="position:absolute;left:749px;top:400px;width:18px;height:16px;background:#a0a0a0;"></div><div style="position:absolute;left:750px;top:401px;width:17px;height:15px;background:#e3e3e3;"></div><div style="position:absolute;left:750px;top:401px;width:16px;height:14px;background:#696969;"></div><div style="position:absolute;left:751px;top:402px;width:15px;height:13px;background:#C0C0C0;"></div>
<div style="position:absolute;left:775px;top:400px;width:19px;height:17px;background:#fff;"></div><div style="position:absolute;left:775px;top:400px;width:18px;height:16px;background:#a0a0a0;"></div><div style="position:absolute;left:776px;top:401px;width:17px;height:15px;background:#e3e3e3;"></div><div style="position:absolute;left:776px;top:401px;width:16px;height:14px;background:#696969;"></div><div style="position:absolute;left:777px;top:402px;width:15px;height:13px;background:#400040;"></div>
<div style="position:absolute;left:801px;top:400px;width:19px;height:17px;background:#fff;"></div><div style="position:absolute;left:801px;top:400px;width:18px;height:16px;background:#a0a0a0;"></div><div style="position:absolute;left:802px;top:401px;width:17px;height:15px;background:#e3e3e3;"></div><div style="position:absolute;left:802px;top:401px;width:16px;height:14px;background:#696969;"></div><div style="position:absolute;left:803px;top:402px;width:15px;height:13px;background:#FFFFFF;"></div>
<div style="position:absolute;left:618px;top:289px;width:21px;height:19px;border:1px solid #000;"></div>
<div style="position:absolute;left:616px;top:287px;width:25px;height:23px;border:1px dotted #000;"></div>
<span style="position:absolute;left:614.74px;top:434.80px;line-height:16px;white-space:pre;font-size:11px;font-weight:400;color:#000;letter-spacing:-0.003px;transform:scaleY(1.09);transform-origin:0 12px;-webkit-text-stroke:0.22px #000;">Дополнительные цвета:</span>
<div style="position:absolute;left:619px;top:456px;width:19px;height:17px;background:#fff;"></div><div style="position:absolute;left:619px;top:456px;width:18px;height:16px;background:#a0a0a0;"></div><div style="position:absolute;left:620px;top:457px;width:17px;height:15px;background:#e3e3e3;"></div><div style="position:absolute;left:620px;top:457px;width:16px;height:14px;background:#696969;"></div><div style="position:absolute;left:621px;top:458px;width:15px;height:13px;background:#000000;"></div>
<div style="position:absolute;left:645px;top:456px;width:19px;height:17px;background:#fff;"></div><div style="position:absolute;left:645px;top:456px;width:18px;height:16px;background:#a0a0a0;"></div><div style="position:absolute;left:646px;top:457px;width:17px;height:15px;background:#e3e3e3;"></div><div style="position:absolute;left:646px;top:457px;width:16px;height:14px;background:#696969;"></div><div style="position:absolute;left:647px;top:458px;width:15px;height:13px;background:#000000;"></div>
<div style="position:absolute;left:671px;top:456px;width:19px;height:17px;background:#fff;"></div><div style="position:absolute;left:671px;top:456px;width:18px;height:16px;background:#a0a0a0;"></div><div style="position:absolute;left:672px;top:457px;width:17px;height:15px;background:#e3e3e3;"></div><div style="position:absolute;left:672px;top:457px;width:16px;height:14px;background:#696969;"></div><div style="position:absolute;left:673px;top:458px;width:15px;height:13px;background:#000000;"></div>
<div style="position:absolute;left:697px;top:456px;width:19px;height:17px;background:#fff;"></div><div style="position:absolute;left:697px;top:456px;width:18px;height:16px;background:#a0a0a0;"></div><div style="position:absolute;left:698px;top:457px;width:17px;height:15px;background:#e3e3e3;"></div><div style="position:absolute;left:698px;top:457px;width:16px;height:14px;background:#696969;"></div><div style="position:absolute;left:699px;top:458px;width:15px;height:13px;background:#000000;"></div>
<div style="position:absolute;left:723px;top:456px;width:19px;height:17px;background:#fff;"></div><div style="position:absolute;left:723px;top:456px;width:18px;height:16px;background:#a0a0a0;"></div><div style="position:absolute;left:724px;top:457px;width:17px;height:15px;background:#e3e3e3;"></div><div style="position:absolute;left:724px;top:457px;width:16px;height:14px;background:#696969;"></div><div style="position:absolute;left:725px;top:458px;width:15px;height:13px;background:#000000;"></div>
<div style="position:absolute;left:749px;top:456px;width:19px;height:17px;background:#fff;"></div><div style="position:absolute;left:749px;top:456px;width:18px;height:16px;background:#a0a0a0;"></div><div style="position:absolute;left:750px;top:457px;width:17px;height:15px;background:#e3e3e3;"></div><div style="position:absolute;left:750px;top:457px;width:16px;height:14px;background:#696969;"></div><div style="position:absolute;left:751px;top:458px;width:15px;height:13px;background:#000000;"></div>
<div style="position:absolute;left:775px;top:456px;width:19px;height:17px;background:#fff;"></div><div style="position:absolute;left:775px;top:456px;width:18px;height:16px;background:#a0a0a0;"></div><div style="position:absolute;left:776px;top:457px;width:17px;height:15px;background:#e3e3e3;"></div><div style="position:absolute;left:776px;top:457px;width:16px;height:14px;background:#696969;"></div><div style="position:absolute;left:777px;top:458px;width:15px;height:13px;background:#000000;"></div>
<div style="position:absolute;left:801px;top:456px;width:19px;height:17px;background:#fff;"></div><div style="position:absolute;left:801px;top:456px;width:18px;height:16px;background:#a0a0a0;"></div><div style="position:absolute;left:802px;top:457px;width:17px;height:15px;background:#e3e3e3;"></div><div style="position:absolute;left:802px;top:457px;width:16px;height:14px;background:#696969;"></div><div style="position:absolute;left:803px;top:458px;width:15px;height:13px;background:#000000;"></div>
<div style="position:absolute;left:619px;top:478px;width:19px;height:17px;background:#fff;"></div><div style="position:absolute;left:619px;top:478px;width:18px;height:16px;background:#a0a0a0;"></div><div style="position:absolute;left:620px;top:479px;width:17px;height:15px;background:#e3e3e3;"></div><div style="position:absolute;left:620px;top:479px;width:16px;height:14px;background:#696969;"></div><div style="position:absolute;left:621px;top:480px;width:15px;height:13px;background:#000000;"></div>
<div style="position:absolute;left:645px;top:478px;width:19px;height:17px;background:#fff;"></div><div style="position:absolute;left:645px;top:478px;width:18px;height:16px;background:#a0a0a0;"></div><div style="position:absolute;left:646px;top:479px;width:17px;height:15px;background:#e3e3e3;"></div><div style="position:absolute;left:646px;top:479px;width:16px;height:14px;background:#696969;"></div><div style="position:absolute;left:647px;top:480px;width:15px;height:13px;background:#000000;"></div>
<div style="position:absolute;left:671px;top:478px;width:19px;height:17px;background:#fff;"></div><div style="position:absolute;left:671px;top:478px;width:18px;height:16px;background:#a0a0a0;"></div><div style="position:absolute;left:672px;top:479px;width:17px;height:15px;background:#e3e3e3;"></div><div style="position:absolute;left:672px;top:479px;width:16px;height:14px;background:#696969;"></div><div style="position:absolute;left:673px;top:480px;width:15px;height:13px;background:#000000;"></div>
<div style="position:absolute;left:697px;top:478px;width:19px;height:17px;background:#fff;"></div><div style="position:absolute;left:697px;top:478px;width:18px;height:16px;background:#a0a0a0;"></div><div style="position:absolute;left:698px;top:479px;width:17px;height:15px;background:#e3e3e3;"></div><div style="position:absolute;left:698px;top:479px;width:16px;height:14px;background:#696969;"></div><div style="position:absolute;left:699px;top:480px;width:15px;height:13px;background:#000000;"></div>
<div style="position:absolute;left:723px;top:478px;width:19px;height:17px;background:#fff;"></div><div style="position:absolute;left:723px;top:478px;width:18px;height:16px;background:#a0a0a0;"></div><div style="position:absolute;left:724px;top:479px;width:17px;height:15px;background:#e3e3e3;"></div><div style="position:absolute;left:724px;top:479px;width:16px;height:14px;background:#696969;"></div><div style="position:absolute;left:725px;top:480px;width:15px;height:13px;background:#000000;"></div>
<div style="position:absolute;left:749px;top:478px;width:19px;height:17px;background:#fff;"></div><div style="position:absolute;left:749px;top:478px;width:18px;height:16px;background:#a0a0a0;"></div><div style="position:absolute;left:750px;top:479px;width:17px;height:15px;background:#e3e3e3;"></div><div style="position:absolute;left:750px;top:479px;width:16px;height:14px;background:#696969;"></div><div style="position:absolute;left:751px;top:480px;width:15px;height:13px;background:#000000;"></div>
<div style="position:absolute;left:775px;top:478px;width:19px;height:17px;background:#fff;"></div><div style="position:absolute;left:775px;top:478px;width:18px;height:16px;background:#a0a0a0;"></div><div style="position:absolute;left:776px;top:479px;width:17px;height:15px;background:#e3e3e3;"></div><div style="position:absolute;left:776px;top:479px;width:16px;height:14px;background:#696969;"></div><div style="position:absolute;left:777px;top:480px;width:15px;height:13px;background:#000000;"></div>
<div style="position:absolute;left:801px;top:478px;width:19px;height:17px;background:#fff;"></div><div style="position:absolute;left:801px;top:478px;width:18px;height:16px;background:#a0a0a0;"></div><div style="position:absolute;left:802px;top:479px;width:17px;height:15px;background:#e3e3e3;"></div><div style="position:absolute;left:802px;top:479px;width:16px;height:14px;background:#696969;"></div><div style="position:absolute;left:803px;top:480px;width:15px;height:13px;background:#000000;"></div>
<div style="position:absolute;left:616px;top:509px;width:208px;height:21px;background:#cccccc;border:1px solid #bfbfbf;"></div>
<span style="position:absolute;left:667.94px;top:512.40px;line-height:16px;white-space:pre;font-size:11px;font-weight:400;color:#838383;letter-spacing:-0.047px;transform:scaleY(1.09);transform-origin:0 12px;-webkit-text-stroke:0.22px #838383;">Определить цвет &gt;&gt;</span>
<div style="position:absolute;left:616px;top:535px;width:64px;height:21px;background:#e1e1e1;border:2px solid #0078d7;"></div>
<span style="position:absolute;left:638.94px;top:538.00px;line-height:16px;white-space:pre;font-size:11px;font-weight:400;color:#000;letter-spacing:0.012px;transform:scaleY(1.09);transform-origin:0 12px;-webkit-text-stroke:0.22px #000;">OK</span>
<div style="position:absolute;left:688px;top:535px;width:64px;height:21px;background:#e1e1e1;border:1px solid #adadad;"></div>
<span style="position:absolute;left:698.94px;top:538.00px;line-height:16px;white-space:pre;font-size:11px;font-weight:400;color:#000;letter-spacing:-0.056px;transform:scaleY(1.09);transform-origin:0 12px;-webkit-text-stroke:0.22px #000;">Отмена</span>
<div style="position:absolute;left:837px;top:271px;width:192px;height:189px;border-top:1px solid #a0a0a0;border-left:1px solid #a0a0a0;border-right:1px solid #fff;border-bottom:1px solid #fff;"></div>
<div style="position:absolute;left:838px;top:272px;width:190px;height:187px;background:linear-gradient(180deg,rgba(128,128,128,0.000) 0.000% 1.613%,rgba(128,128,128,0.016) 1.613% 3.226%,rgba(128,128,128,0.033) 3.226% 4.839%,rgba(128,128,128,0.049) 4.839% 6.452%,rgba(128,128,128,0.066) 6.452% 8.065%,rgba(128,128,128,0.082) 8.065% 9.677%,rgba(128,128,128,0.098) 9.677% 11.290%,rgba(128,128,128,0.115) 11.290% 12.903%,rgba(128,128,128,0.131) 12.903% 14.516%,rgba(128,128,128,0.148) 14.516% 16.129%,rgba(128,128,128,0.164) 16.129% 17.742%,rgba(128,128,128,0.180) 17.742% 19.355%,rgba(128,128,128,0.197) 19.355% 20.968%,rgba(128,128,128,0.213) 20.968% 22.581%,rgba(128,128,128,0.230) 22.581% 24.194%,rgba(128,128,128,0.246) 24.194% 25.806%,rgba(128,128,128,0.262) 25.806% 27.419%,rgba(128,128,128,0.279) 27.419% 29.032%,rgba(128,128,128,0.295) 29.032% 30.645%,rgba(128,128,128,0.311) 30.645% 32.258%,rgba(128,128,128,0.328) 32.258% 33.871%,rgba(128,128,128,0.344) 33.871% 35.484%,rgba(128,128,128,0.361) 35.484% 37.097%,rgba(128,128,128,0.377) 37.097% 38.710%,rgba(128,128,128,0.393) 38.710% 40.323%,rgba(128,128,128,0.410) 40.323% 41.935%,rgba(128,128,128,0.426) 41.935% 43.548%,rgba(128,128,128,0.443) 43.548% 45.161%,rgba(128,128,128,0.459) 45.161% 46.774%,rgba(128,128,128,0.475) 46.774% 48.387%,rgba(128,128,128,0.492) 48.387% 50.000%,rgba(128,128,128,0.508) 50.000% 51.613%,rgba(128,128,128,0.525) 51.613% 53.226%,rgba(128,128,128,0.541) 53.226% 54.839%,rgba(128,128,128,0.557) 54.839% 56.452%,rgba(128,128,128,0.574) 56.452% 58.065%,rgba(128,128,128,0.590) 58.065% 59.677%,rgba(128,128,128,0.607) 59.677% 61.290%,rgba(128,128,128,0.623) 61.290% 62.903%,rgba(128,128,128,0.639) 62.903% 64.516%,rgba(128,128,128,0.656) 64.516% 66.129%,rgba(128,128,128,0.672) 66.129% 67.742%,rgba(128,128,128,0.689) 67.742% 69.355%,rgba(128,128,128,0.705) 69.355% 70.968%,rgba(128,128,128,0.721) 70.968% 72.581%,rgba(128,128,128,0.738) 72.581% 74.194%,rgba(128,128,128,0.754) 74.194% 75.806%,rgba(128,128,128,0.770) 75.806% 77.419%,rgba(128,128,128,0.787) 77.419% 79.032%,rgba(128,128,128,0.803) 79.032% 80.645%,rgba(128,128,128,0.820) 80.645% 82.258%,rgba(128,128,128,0.836) 82.258% 83.871%,rgba(128,128,128,0.852) 83.871% 85.484%,rgba(128,128,128,0.869) 85.484% 87.097%,rgba(128,128,128,0.885) 87.097% 88.710%,rgba(128,128,128,0.902) 88.710% 90.323%,rgba(128,128,128,0.918) 90.323% 91.935%,rgba(128,128,128,0.934) 91.935% 93.548%,rgba(128,128,128,0.951) 93.548% 95.161%,rgba(128,128,128,0.967) 95.161% 96.774%,rgba(128,128,128,0.984) 96.774% 98.387%,rgba(128,128,128,1.000) 98.387% 100.000%),linear-gradient(90deg,hsl(0.0,100%,50%) 0.000% 1.562%,hsl(5.7,100%,50%) 1.562% 3.125%,hsl(11.4,100%,50%) 3.125% 4.688%,hsl(17.1,100%,50%) 4.688% 6.250%,hsl(22.9,100%,50%) 6.250% 7.812%,hsl(28.6,100%,50%) 7.812% 9.375%,hsl(34.3,100%,50%) 9.375% 10.938%,hsl(40.0,100%,50%) 10.938% 12.500%,hsl(45.7,100%,50%) 12.500% 14.062%,hsl(51.4,100%,50%) 14.062% 15.625%,hsl(57.1,100%,50%) 15.625% 17.188%,hsl(62.9,100%,50%) 17.188% 18.750%,hsl(68.6,100%,50%) 18.750% 20.312%,hsl(74.3,100%,50%) 20.312% 21.875%,hsl(80.0,100%,50%) 21.875% 23.438%,hsl(85.7,100%,50%) 23.438% 25.000%,hsl(91.4,100%,50%) 25.000% 26.562%,hsl(97.1,100%,50%) 26.562% 28.125%,hsl(102.9,100%,50%) 28.125% 29.688%,hsl(108.6,100%,50%) 29.688% 31.250%,hsl(114.3,100%,50%) 31.250% 32.812%,hsl(120.0,100%,50%) 32.812% 34.375%,hsl(125.7,100%,50%) 34.375% 35.938%,hsl(131.4,100%,50%) 35.938% 37.500%,hsl(137.1,100%,50%) 37.500% 39.062%,hsl(142.9,100%,50%) 39.062% 40.625%,hsl(148.6,100%,50%) 40.625% 42.188%,hsl(154.3,100%,50%) 42.188% 43.750%,hsl(160.0,100%,50%) 43.750% 45.312%,hsl(165.7,100%,50%) 45.312% 46.875%,hsl(171.4,100%,50%) 46.875% 48.438%,hsl(177.1,100%,50%) 48.438% 50.000%,hsl(182.9,100%,50%) 50.000% 51.562%,hsl(188.6,100%,50%) 51.562% 53.125%,hsl(194.3,100%,50%) 53.125% 54.688%,hsl(200.0,100%,50%) 54.688% 56.250%,hsl(205.7,100%,50%) 56.250% 57.812%,hsl(211.4,100%,50%) 57.812% 59.375%,hsl(217.1,100%,50%) 59.375% 60.938%,hsl(222.9,100%,50%) 60.938% 62.500%,hsl(228.6,100%,50%) 62.500% 64.062%,hsl(234.3,100%,50%) 64.062% 65.625%,hsl(240.0,100%,50%) 65.625% 67.188%,hsl(245.7,100%,50%) 67.188% 68.750%,hsl(251.4,100%,50%) 68.750% 70.312%,hsl(257.1,100%,50%) 70.312% 71.875%,hsl(262.9,100%,50%) 71.875% 73.438%,hsl(268.6,100%,50%) 73.438% 75.000%,hsl(274.3,100%,50%) 75.000% 76.562%,hsl(280.0,100%,50%) 76.562% 78.125%,hsl(285.7,100%,50%) 78.125% 79.688%,hsl(291.4,100%,50%) 79.688% 81.250%,hsl(297.1,100%,50%) 81.250% 82.812%,hsl(302.9,100%,50%) 82.812% 84.375%,hsl(308.6,100%,50%) 84.375% 85.938%,hsl(314.3,100%,50%) 85.938% 87.500%,hsl(320.0,100%,50%) 87.500% 89.062%,hsl(325.7,100%,50%) 89.062% 90.625%,hsl(331.4,100%,50%) 90.625% 92.188%,hsl(337.1,100%,50%) 92.188% 93.750%,hsl(342.9,100%,50%) 93.750% 95.312%,hsl(348.6,100%,50%) 95.312% 96.875%,hsl(354.3,100%,50%) 96.875% 98.438%,hsl(360.0,100%,50%) 98.438% 100.000%);"></div>
<div style="position:absolute;left:849px;top:272px;width:5px;height:2px;background:#000;"></div>
<div style="position:absolute;left:863px;top:272px;width:5px;height:2px;background:#000;"></div>
<div style="position:absolute;left:857px;top:277px;width:3px;height:5px;background:#000;"></div>
<div style="position:absolute;left:1044px;top:271px;width:12px;height:189px;border-top:1px solid #a0a0a0;border-left:1px solid #a0a0a0;border-right:1px solid #fff;border-bottom:1px solid #fff;"></div>
<div style="position:absolute;left:1045px;top:272px;width:10px;height:187px;background:linear-gradient(180deg,rgb(255,255,255) 0.000% 4.167%,rgb(255,247,233) 4.167% 8.333%,rgb(255,239,211) 8.333% 12.500%,rgb(255,232,188) 12.500% 16.667%,rgb(255,224,166) 16.667% 20.833%,rgb(255,216,144) 20.833% 25.000%,rgb(255,208,122) 25.000% 29.167%,rgb(255,201,100) 29.167% 33.333%,rgb(255,193,78) 33.333% 37.500%,rgb(255,185,55) 37.500% 41.667%,rgb(255,177,33) 41.667% 45.833%,rgb(255,170,11) 45.833% 50.000%,rgb(244,159,0) 50.000% 54.167%,rgb(222,144,0) 54.167% 58.333%,rgb(200,130,0) 58.333% 62.500%,rgb(177,115,0) 62.500% 66.667%,rgb(155,101,0) 66.667% 70.833%,rgb(133,86,0) 70.833% 75.000%,rgb(111,72,0) 75.000% 79.167%,rgb(89,58,0) 79.167% 83.333%,rgb(67,43,0) 83.333% 87.500%,rgb(44,29,0) 87.500% 91.667%,rgb(22,14,0) 91.667% 95.833%,rgb(0,0,0) 95.833% 100.000%);"></div>
<svg style="position:absolute;left:1056px;top:305px" width="16" height="29" viewBox="0 0 16 29"><path d="M0.8 14.5 L15 1 L15 28 Z" fill="#000"/></svg>
<div style="position:absolute;left:837px;top:466px;width:60px;height:42px;background:#ffd17d;border-top:1px solid #a0a0a0;border-left:1px solid #a0a0a0;border-right:1px solid #fff;border-bottom:1px solid #fff;"></div>
<span style="position:absolute;left:832.14px;top:508.00px;line-height:16px;white-space:pre;font-size:11px;font-weight:400;color:#000;letter-spacing:-0.282px;transform:scaleY(1.09);transform-origin:0 12px;-webkit-text-stroke:0.22px #000;">Цвет</span>
<span style="position:absolute;left:858.94px;top:508.00px;line-height:16px;white-space:pre;font-size:11px;font-weight:400;color:#000;letter-spacing:-0.059px;transform:scaleY(1.09);transform-origin:0 12px;-webkit-text-stroke:0.22px #000;">Заливка</span>
<div style="position:absolute;left:857px;top:510.5px;width:1.2px;height:11.5px;background:#4a4a4a;"></div>
<span style="position:absolute;left:911.58px;top:468.00px;line-height:16px;white-space:pre;font-size:11px;font-weight:400;color:#000;letter-spacing:-0.045px;transform:scaleY(1.09);transform-origin:0 12px;-webkit-text-stroke:0.22px #000;">Оттенок:</span>
<div style="position:absolute;left:957px;top:466px;width:27px;height:20px;background:#fff;border:1px solid #7a7a7a;"></div>
<span style="position:absolute;left:959.84px;top:468.00px;line-height:16px;white-space:pre;font-size:11px;font-weight:400;color:#000;letter-spacing:0px;transform:scaleY(1.09);transform-origin:0 12px;-webkit-text-stroke:0.22px #000;">26</span>
<span style="position:absolute;left:907.14px;top:490.60px;line-height:16px;white-space:pre;font-size:11px;font-weight:400;color:#000;letter-spacing:-0.082px;transform:scaleY(1.09);transform-origin:0 12px;-webkit-text-stroke:0.22px #000;">Контраст:</span>
<div style="position:absolute;left:957px;top:488px;width:27px;height:20px;background:#fff;border:1px solid #7a7a7a;"></div>
<span style="position:absolute;left:959.84px;top:490.60px;line-height:16px;white-space:pre;font-size:11px;font-weight:400;color:#000;letter-spacing:0px;transform:scaleY(1.09);transform-origin:0 12px;-webkit-text-stroke:0.22px #000;">240</span>
<span style="position:absolute;left:911.60px;top:512.80px;line-height:16px;white-space:pre;font-size:11px;font-weight:400;color:#000;letter-spacing:-0.015px;transform:scaleY(1.09);transform-origin:0 12px;-webkit-text-stroke:0.22px #000;">Яркость:</span>
<div style="position:absolute;left:957px;top:511px;width:27px;height:20px;background:#fff;border:1px solid #7a7a7a;"></div>
<span style="position:absolute;left:959.84px;top:512.80px;line-height:16px;white-space:pre;font-size:11px;font-weight:400;color:#000;letter-spacing:0px;transform:scaleY(1.09);transform-origin:0 12px;-webkit-text-stroke:0.22px #000;">179</span>
<span style="position:absolute;left:990.65px;top:468.00px;line-height:16px;white-space:pre;font-size:11px;font-weight:400;color:#000;letter-spacing:0.025px;transform:scaleY(1.09);transform-origin:0 12px;-webkit-text-stroke:0.22px #000;">Красный:</span>
<div style="position:absolute;left:1041px;top:466px;width:27px;height:20px;background:#fff;border:1px solid #7a7a7a;"></div>
<span style="position:absolute;left:1044.14px;top:468.00px;line-height:16px;white-space:pre;font-size:11px;font-weight:400;color:#000;letter-spacing:0px;transform:scaleY(1.09);transform-origin:0 12px;-webkit-text-stroke:0.22px #000;">255</span>
<span style="position:absolute;left:990.54px;top:490.60px;line-height:16px;white-space:pre;font-size:11px;font-weight:400;color:#000;letter-spacing:-0.074px;transform:scaleY(1.09);transform-origin:0 12px;-webkit-text-stroke:0.22px #000;">Зеленый:</span>
<div style="position:absolute;left:1041px;top:488px;width:27px;height:20px;background:#fff;border:1px solid #7a7a7a;"></div>
<span style="position:absolute;left:1044.14px;top:490.60px;line-height:16px;white-space:pre;font-size:11px;font-weight:400;color:#000;letter-spacing:0px;transform:scaleY(1.09);transform-origin:0 12px;-webkit-text-stroke:0.22px #000;">209</span>
<span style="position:absolute;left:1003.62px;top:512.80px;line-height:16px;white-space:pre;font-size:11px;font-weight:400;color:#000;letter-spacing:-0.198px;transform:scaleY(1.09);transform-origin:0 12px;-webkit-text-stroke:0.22px #000;">Синий:</span>
<div style="position:absolute;left:1041px;top:511px;width:27px;height:20px;background:#fff;border:1px solid #7a7a7a;"></div>
<span style="position:absolute;left:1044.14px;top:512.80px;line-height:16px;white-space:pre;font-size:11px;font-weight:400;color:#000;letter-spacing:0px;transform:scaleY(1.09);transform-origin:0 12px;-webkit-text-stroke:0.22px #000;">125</span>
<div style="position:absolute;left:838px;top:535px;width:229px;height:21px;background:#e1e1e1;border:1px solid #adadad;"></div>
<span style="position:absolute;left:906.54px;top:538.00px;line-height:16px;white-space:pre;font-size:11px;font-weight:400;color:#000;letter-spacing:-0.024px;transform:scaleY(1.09);transform-origin:0 12px;-webkit-text-stroke:0.22px #000;">Добавить в набор</span>
<svg style="position:absolute;left:440px;top:387px" width="14" height="22" viewBox="0 0 14 22">
<path d="M1 1 L1 17.2 L4.8 13.6 L7.6 20 L10 19 L7.2 12.8 L12.4 12.6 Z" fill="#fff" stroke="#000" stroke-width="1"/></svg>
</div></body></html>
